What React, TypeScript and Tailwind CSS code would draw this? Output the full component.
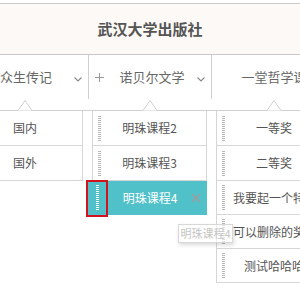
import React from "react";

const Chevron = () => (
  <svg width="8" height="5" viewBox="0 0 8 5" className="absolute right-[6px] top-[22px]">
    <polyline points="0.5,0.5 4,4 7.5,0.5" fill="none" stroke="#888" strokeWidth="1.1" />
  </svg>
);

const Caret = () => (
  <svg
    width="14"
    height="11"
    viewBox="0 0 14 11"
    className="absolute left-1/2 -translate-x-1/2 -top-[11px]"
  >
    <polygon points="0,10.5 7,0.5 14,10.5" fill="white" />
    <polyline points="0,10.5 7,0.5 14,10.5" fill="none" stroke="#cfcfcf" />
  </svg>
);

const Handle = ({ light }: { light?: boolean }) => (
  <div
    className={
      light
        ? "w-[3px] h-[26px] shrink-0 bg-[repeating-linear-gradient(to_bottom,#ffffff_0_1px,transparent_1px_2px)]"
        : "w-[3px] h-[25px] shrink-0 bg-[repeating-linear-gradient(to_bottom,#b8b8b8_0_1px,transparent_1px_2px)]"
    }
  />
);

const SortRow = ({ label, h = "h-[35px]" }: { label: string; h?: string }) => (
  <div className={`${h} flex items-center pl-[5px] pr-[16px] border-b border-[#d6d6d6]`}>
    <Handle />
    <span className="flex-1 min-w-0 pl-[8px] text-center overflow-hidden whitespace-nowrap text-[12px] text-[#555]">
      {label}
    </span>
  </div>
);

export default function App() {
  return (
    <div className="relative w-[300px] h-[300px] overflow-hidden bg-white font-['Noto_Sans_CJK_SC','Noto_Sans',sans-serif]">
      <div className="pt-[3px]">
        <div className="h-[52px] border-y border-[#c9c9c9] bg-[#fdf9f7] flex items-center justify-center">
          <span className="text-[15px] font-bold text-[#555]">武汉大学出版社</span>
        </div>

        {/* tabs */}
        <div className="-ml-[36px] w-[372px] flex h-[44px]">
          <div className="relative w-[124px] flex items-center justify-center">
            <span className="text-[13px] text-[#666]">众生传记</span>
            <Chevron />
          </div>
          <div className="relative w-[124px] flex items-center justify-center border-x border-[#d0d0d0]">
            <svg width="9" height="9" viewBox="0 0 9 9" className="absolute left-[6px] top-[18px]">
              <line x1="4.5" y1="0" x2="4.5" y2="9" stroke="#999" />
              <line x1="0" y1="4.5" x2="9" y2="4.5" stroke="#999" />
            </svg>
            <span className="text-[13px] text-[#666] pl-[4px]">诺贝尔文学</span>
            <Chevron />
          </div>
          <div className="relative w-[124px] flex items-center justify-center">
            <span className="text-[13px] text-[#666]">一堂哲学课</span>
          </div>
        </div>

        {/* dropdowns */}
        <div className="mt-[11px] -ml-[32px] w-[400px] flex items-start gap-[9px] border-t border-[#d0d0d0]">
          <div className="relative w-[115px] border-r border-[#d6d6d6]">
            <Caret />
            <div className="h-[35px] flex items-center justify-center border-b border-[#d6d6d6] text-[12px] text-[#555]">
              国内
            </div>
            <div className="h-[35px] flex items-center justify-center border-b border-[#d6d6d6] text-[12px] text-[#555]">
              国外
            </div>
          </div>

          <div className="relative w-[115px] flex flex-col">
            <Caret />
            <div className="border-x border-[#d6d6d6]">
              <SortRow label="明珠课程2" />
              <SortRow label="明珠课程3" />
            </div>
            <div className="relative -ml-[4px] w-[119px] h-[34px] bg-[#50c0c9] flex items-center pl-[8px] pr-[16px]">
              <div className="absolute -left-[2px] -top-[1px] w-[22px] h-[37px] border-2 border-[#d3121f]" />
              <Handle light />
              <span className="flex-1 pl-[10px] text-center text-[12px] text-white">明珠课程4</span>
              <svg width="10" height="10" viewBox="0 0 10 10" className="absolute right-[6px] top-[12px]">
                <line x1="1" y1="1" x2="9" y2="9" stroke="#a99a9a" strokeWidth="1.3" />
                <line x1="9" y1="1" x2="1" y2="9" stroke="#a99a9a" strokeWidth="1.3" />
              </svg>
            </div>
          </div>

          <div className="relative w-[115px] border-l border-[#d6d6d6]">
            <Caret />
            <SortRow label="一等奖" />
            <SortRow label="二等奖" />
            <SortRow label="我要起一个特别的名字" h="h-[34px]" />
            <SortRow label="可以删除的奖项名称" h="h-[34px]" />
            <SortRow label="测试哈哈哈" h="h-[34px]" />
          </div>
        </div>
      </div>

      {/* drag tooltip */}
      <div className="absolute left-[178px] top-[224px] w-[55px] h-[19px] flex items-center justify-center border border-[#d8d8d8] bg-white/60 shadow-[1px_2px_4px_rgba(0,0,0,0.15)] text-[11px] text-[#c4c4c4]">
        明珠课程4
      </div>
    </div>
  );
}
